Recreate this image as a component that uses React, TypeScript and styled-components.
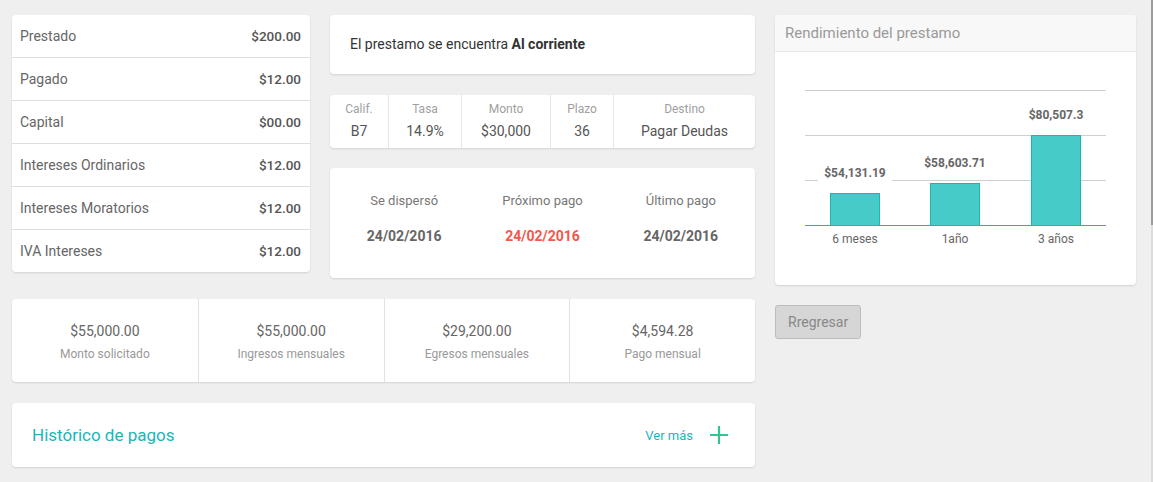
import React from "react";
import styled, { createGlobalStyle } from "styled-components";

const Global = createGlobalStyle`
  html, body { margin: 0; padding: 0; background: #efefef; }
  body { font-family: Roboto, "Noto Sans", "Liberation Sans", sans-serif; color: #555; }
  * { box-sizing: border-box; }
`;

const Page = styled.div`
  display: flex;
  gap: 20px;
  padding: 15px 12px;
  width: 1153px;
  height: 482px;
  overflow: hidden;
`;

const Main = styled.div`
  width: 743px;
  display: flex;
  flex-direction: column;
  gap: 21px;
`;

const TopRow = styled.div`
  display: flex;
  gap: 20px;
  align-items: flex-start;
`;

const Card = styled.div`
  background: #fff;
  border-radius: 4px;
  box-shadow: 0 1px 2px rgba(0, 0, 0, 0.12);
`;

const BalanceCard = styled(Card)`
  width: 298px;
  display: flex;
  flex-direction: column;
`;

const BalanceRow = styled.div`
  height: 43px;
  display: flex;
  align-items: center;
  justify-content: space-between;
  padding: 0 9px 1px 8px;
  font-size: 14px;
  border-bottom: 1px solid #dedede;
  &:last-child { border-bottom: none; height: 42px; }
`;

const RowLabel = styled.span`
  color: #666;
`;

const RowValue = styled.span`
  color: #555;
  font-weight: 500;
  font-size: 13.5px;
`;

const MidStack = styled.div`
  width: 425px;
  display: flex;
  flex-direction: column;
`;

const StatusCard = styled(Card)`
  height: 59px;
  display: flex;
  align-items: center;
  padding: 0 20px 2px;
  font-size: 14px;
  color: #333;
  b { font-weight: 700; }
`;

const InfoCard = styled(Card)`
  margin-top: 21px;
  height: 53px;
  display: grid;
  grid-template-columns: 58px 73px 89px 63px 1fr;
`;

const InfoCell = styled.div`
  display: flex;
  flex-direction: column;
  align-items: center;
  justify-content: center;
  gap: 7px;
  padding-bottom: 3px;
  border-left: 1px solid #e6e6e6;
  &:first-child { border-left: none; }
`;

const InfoLabel = styled.span`
  font-size: 12px;
  line-height: 14px;
  color: #a0a0a0;
`;

const InfoValue = styled.span`
  font-size: 14px;
  line-height: 16px;
  color: #555;
`;

const DatesCard = styled(Card)`
  margin-top: 20px;
  height: 110px;
  display: grid;
  grid-template-columns: repeat(3, 1fr);
  padding: 0 5px;
`;

const DateCell = styled.div`
  display: flex;
  flex-direction: column;
  align-items: center;
  justify-content: center;
  gap: 20px;
  padding-bottom: 9px;
`;

const DateLabel = styled.span`
  font-size: 13px;
  line-height: 15px;
  color: #777;
`;

const DateValue = styled.span<{ $alert?: boolean }>`
  font-size: 14px;
  line-height: 16px;
  font-weight: 700;
  color: ${(p) => (p.$alert ? "#f5574b" : "#666")};
`;

const SummaryCard = styled(Card)`
  height: 84px;
  display: grid;
  grid-template-columns: repeat(4, 1fr);
`;

const SummaryCell = styled.div`
  display: flex;
  flex-direction: column;
  align-items: center;
  justify-content: center;
  gap: 8px;
  padding-top: 3px;
  border-left: 1px solid #e2e2e2;
  &:first-child { border-left: none; }
`;

const SummaryValue = styled.span`
  font-size: 14px;
  line-height: 16px;
  color: #666;
`;

const SummaryLabel = styled.span`
  font-size: 12px;
  line-height: 14px;
  color: #999;
`;

const HistoryCard = styled(Card)`
  height: 64px;
  display: flex;
  align-items: center;
  justify-content: space-between;
  padding: 0 26px 0 20px;
`;

const HistoryTitle = styled.span`
  font-size: 17px;
  color: #1ab5b8;
`;

const MoreLink = styled.a`
  display: flex;
  align-items: center;
  gap: 16px;
  font-size: 13px;
  color: #1ab5b8;
  text-decoration: none;
  cursor: pointer;
`;

const Aside = styled.div`
  width: 361px;
  display: flex;
  flex-direction: column;
  align-items: flex-start;
  gap: 20px;
`;

const ChartCard = styled(Card)`
  width: 361px;
  height: 270px;
  display: flex;
  flex-direction: column;
  overflow: hidden;
`;

const ChartHeader = styled.div`
  flex-shrink: 0;
  height: 37px;
  background: #f8f8f8;
  border-bottom: 1px solid #e6e6e6;
  display: flex;
  align-items: center;
  padding: 0 10px 1px;
  font-size: 15px;
  color: #9a9a9a;
`;

const ChartBody = styled.div`
  flex: 1;
  svg { display: block; }
`;

const BackButton = styled.button`
  height: 34px;
  padding: 0 12px;
  background: #d6d6d6;
  border: 1px solid #bcbcbc;
  border-radius: 3px;
  font-family: inherit;
  font-size: 14px;
  color: #888;
`;

const ScrollTrack = styled.div`
  position: fixed;
  top: 0;
  right: 0;
  width: 2px;
  height: 100%;
  background: #dcdcdc;
`;

const ScrollThumb = styled.div`
  width: 2px;
  height: 225px;
  background: #9c9c9c;
`;

const balance = [
  ["Prestado", "$200.00"],
  ["Pagado", "$12.00"],
  ["Capital", "$00.00"],
  ["Intereses Ordinarios", "$12.00"],
  ["Intereses Moratorios", "$12.00"],
  ["IVA Intereses", "$12.00"],
];

const info = [
  ["Calif.", "B7"],
  ["Tasa", "14.9%"],
  ["Monto", "$30,000"],
  ["Plazo", "36"],
  ["Destino", "Pagar Deudas"],
];

const summary = [
  ["$55,000.00", "Monto solicitado"],
  ["$55,000.00", "Ingresos mensuales"],
  ["$29,200.00", "Egresos mensuales"],
  ["$4,594.28", "Pago mensual"],
];

const bars = [
  { x: 55, top: 142, label: "$54,131.19", name: "6 meses", ly: 126, bg: true },
  { x: 155, top: 132, label: "$58,603.71", name: "1año", ly: 116, bg: false },
  { x: 256, top: 84, label: "$80,507.3", name: "3 años", ly: 68, bg: false },
];

function Chart() {
  return (
    <svg width="361" height="232" viewBox="0 0 361 232">
      {[38, 83, 128].map((y) => (
        <line key={y} x1="30" x2="331" y1={y + 0.5} y2={y + 0.5} stroke="#cfcfcf" strokeWidth="1" />
      ))}
      {bars.map((b) => (
        <g key={b.name}>
          <rect
            x={b.x + 0.5}
            y={b.top - 1 + 0.5}
            width="49"
            height={174 - b.top}
            fill="#46cbc8"
            stroke="#17b8b3"
            strokeWidth="1"
          />
          {b.bg && <rect x={b.x - 12} y={b.ly - 14} width="74" height="17" fill="#fff" />}
          <text
            x={b.x + 25}
            y={b.ly - 1}
            textAnchor="middle"
            fontSize="12"
            fontWeight="700"
            fill="#666"
            fontFamily="Roboto, sans-serif"
          >
            {b.label}
          </text>
          <text
            x={b.x + 25}
            y={191}
            textAnchor="middle"
            fontSize="12"
            fill="#666"
            fontFamily="Roboto, sans-serif"
          >
            {b.name}
          </text>
        </g>
      ))}
      <line x1="30" x2="331" y1="173.5" y2="173.5" stroke="#6a8ccb" strokeWidth="1.2" />
    </svg>
  );
}

function PlusIcon() {
  return (
    <svg width="20" height="20" viewBox="0 0 20 20">
      <path d="M10 1v18M1 10h18" stroke="#35c391" strokeWidth="2.2" fill="none" />
    </svg>
  );
}

export default function App() {
  return (
    <>
      <Global />
      <Page>
        <Main>
          <TopRow>
            <BalanceCard>
              {balance.map(([l, v]) => (
                <BalanceRow key={l}>
                  <RowLabel>{l}</RowLabel>
                  <RowValue>{v}</RowValue>
                </BalanceRow>
              ))}
            </BalanceCard>
            <MidStack>
              <StatusCard>
                <span>
                  El prestamo se encuentra <b>Al corriente</b>
                </span>
              </StatusCard>
              <InfoCard>
                {info.map(([l, v]) => (
                  <InfoCell key={l}>
                    <InfoLabel>{l}</InfoLabel>
                    <InfoValue>{v}</InfoValue>
                  </InfoCell>
                ))}
              </InfoCard>
              <DatesCard>
                <DateCell>
                  <DateLabel>Se dispersó</DateLabel>
                  <DateValue>24/02/2016</DateValue>
                </DateCell>
                <DateCell>
                  <DateLabel>Próximo pago</DateLabel>
                  <DateValue $alert>24/02/2016</DateValue>
                </DateCell>
                <DateCell>
                  <DateLabel>Último pago</DateLabel>
                  <DateValue>24/02/2016</DateValue>
                </DateCell>
              </DatesCard>
            </MidStack>
          </TopRow>
          <SummaryCard>
            {summary.map(([v, l]) => (
              <SummaryCell key={l}>
                <SummaryValue>{v}</SummaryValue>
                <SummaryLabel>{l}</SummaryLabel>
              </SummaryCell>
            ))}
          </SummaryCard>
          <HistoryCard>
            <HistoryTitle>Histórico de pagos</HistoryTitle>
            <MoreLink>
              Ver más
              <PlusIcon />
            </MoreLink>
          </HistoryCard>
        </Main>
        <Aside>
          <ChartCard>
            <ChartHeader>Rendimiento del prestamo</ChartHeader>
            <ChartBody>
              <Chart />
            </ChartBody>
          </ChartCard>
          <BackButton>Rregresar</BackButton>
        </Aside>
      </Page>
      <ScrollTrack>
        <ScrollThumb />
      </ScrollTrack>
    </>
  );
}
